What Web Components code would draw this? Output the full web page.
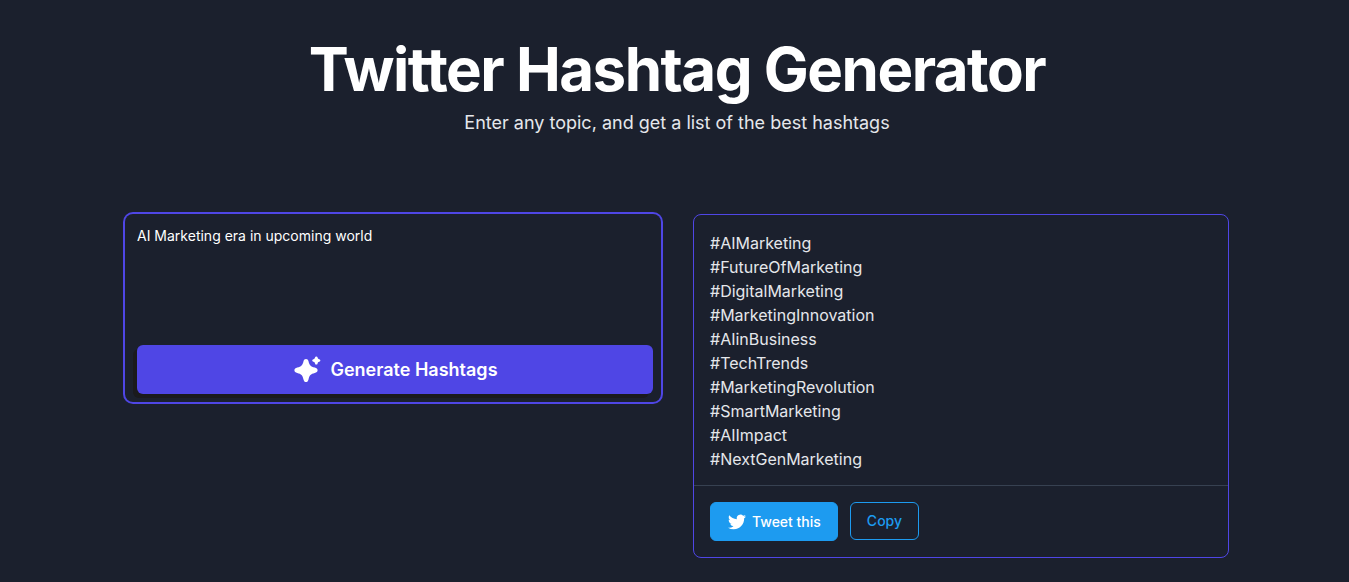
<!DOCTYPE html>
<html lang="en">
<head>
<meta charset="utf-8">
<meta name="viewport" content="width=device-width, initial-scale=1">
<title>Twitter Hashtag Generator</title>
<style>
  :root {
    --bg: #1b202d;
    --text: #e5e7eb;
    --primary: #4f46e5;
    --twitter: #1d9bf0;
    --divider: #374151;
  }

  body {
    margin: 0;
    padding: 0 20px 0 25px;
    background: var(--bg);
    color: var(--text);
    font-family: Inter, "Liberation Sans", sans-serif;
    font-size: 16px;
    line-height: 24px;
  }
</style>
</head>
<body>
<hashtag-page>
  <page-heading slot="heading">
    Twitter Hashtag Generator
    <span slot="subtitle">Enter any topic, and get a list of the best hashtags</span>
  </page-heading>
  <topic-form value="AI Marketing era in upcoming world">Generate Hashtags</topic-form>
  <result-card>
    <div>#AIMarketing</div>
    <div>#FutureOfMarketing</div>
    <div>#DigitalMarketing</div>
    <div>#MarketingInnovation</div>
    <div>#AIinBusiness</div>
    <div>#TechTrends</div>
    <div>#MarketingRevolution</div>
    <div>#SmartMarketing</div>
    <div>#AIImpact</div>
    <div>#NextGenMarketing</div>
    <action-button slot="actions" variant="solid">Tweet this</action-button>
    <action-button slot="actions">Copy</action-button>
  </result-card>
</hashtag-page>

<script>
const SVG_SPARKLE = `<svg viewBox="-1 -1 30 30" xmlns="http://www.w3.org/2000/svg" aria-hidden="true"><path d="M13 3C14.300 3 15.100 3.800 15.500 5.200C16.500 9.400 17.600 10.500 21.800 11.600C23.500 12 24.600 13 24.600 14.300C24.600 15.600 23.500 16.600 21.800 17C17.600 18.100 16.500 19.200 15.500 23.400C15.100 25 14.300 26 13 26C11.700 26 10.900 25 10.500 23.400C9.500 19.200 8.400 18.100 4.200 17C2.500 16.600 1.400 15.600 1.400 14.300C1.400 13 2.500 12 4.200 11.600C8.400 10.500 9.500 9.400 10.500 5.200C10.900 3.800 11.700 3 13 3Z" fill="currentColor"/><path d="M23.300 .4C24 .4 24.400 .8 24.600 1.600C24.900 2.700 25.100 2.900 26.200 3.200C27 3.400 27.400 3.800 27.400 4.500C27.400 5.200 27 5.600 26.200 5.800C25.100 6.100 24.900 6.300 24.600 7.400C24.400 8.200 24 8.600 23.300 8.600C22.600 8.600 22.200 8.200 22 7.400C21.700 6.300 21.500 6.100 20.400 5.800C19.600 5.600 19.200 5.200 19.200 4.500C19.200 3.800 19.600 3.400 20.400 3.200C21.500 2.900 21.700 2.700 22 1.600C22.200 .8 22.600 .4 23.300 .4Z" fill="currentColor"/></svg>`;
const SVG_TWITTER = `<svg viewBox="0 0 24 24" xmlns="http://www.w3.org/2000/svg" aria-hidden="true"><path d="M23.953 4.570a10 10 0 01-2.825.775 4.958 4.958 0 002.163-2.723c-.951.555-2.005.959-3.127 1.184a4.920 4.920 0 00-8.384 4.482C7.690 8.095 4.067 6.130 1.640 3.162a4.822 4.822 0 00-.666 2.475c0 1.710.870 3.213 2.188 4.096a4.904 4.904 0 01-2.228-.616v.060a4.923 4.923 0 003.946 4.827 4.996 4.996 0 01-2.212.085 4.936 4.936 0 004.604 3.417 9.867 9.867 0 01-6.102 2.105c-.390 0-.779-.023-1.170-.067a13.995 13.995 0 007.557 2.209c9.053 0 13.998-7.496 13.998-13.985 0-.210 0-.420-.015-.630A9.935 9.935 0 0024 4.590z" fill="currentColor"/></svg>`;

/* Clones a markup string into an element's shadow root */
function attach(host, markup) {
  const template = document.createElement('template');
  template.innerHTML = markup;
  host.attachShadow({ mode: 'open' }).appendChild(template.content.cloneNode(true));
}

class HashtagPage extends HTMLElement {
  constructor() {
    super();
    attach(this, `
<style>
  :host {
    display: block;
    max-width: 1104px;
    margin: 0 auto;
    padding: 39px 0 24px;
  }

  .columns {
    display: grid;
    grid-template-columns: repeat(2, minmax(0, 1fr));
    align-items: start;
    gap: 32px;
    margin-top: 77px;
  }

  @media (max-width: 720px) {
    .columns { grid-template-columns: minmax(0, 1fr); }
  }
</style>
<main>
  <slot name="heading"></slot>
  <div class="columns"><slot></slot></div>
</main>
`);
  }
}

class PageHeading extends HTMLElement {
  constructor() {
    super();
    attach(this, `
<style>
  :host {
    display: block;
    text-align: center;
  }

  h1 {
    margin: 0;
    color: #fff;
    font-size: 60px;
    line-height: 60px;
    font-weight: 700;
    letter-spacing: -0.025em;
  }

  p {
    margin: 10px 0 0;
    font-size: 18px;
    line-height: 28px;
  }
</style>
<h1><slot></slot></h1>
<p><slot name="subtitle"></slot></p>
`);
  }
}

class TopicForm extends HTMLElement {
  static observedAttributes = ['value'];

  constructor() {
    super();
    attach(this, `
<style>
  :host { display: block; }

  form {
    display: flex;
    flex-direction: column;
    padding: 12px 8px 8px 12px;
    border-radius: 8px;
    box-shadow: 0 0 0 2px var(--primary);
  }

  textarea {
    display: block;
    height: 119px;
    margin: 0;
    padding: 0;
    border: 0;
    outline: 0;
    resize: none;
    background: transparent;
    color: #fff;
    font-family: inherit;
    font-size: 14px;
    line-height: 20px;
  }

  button {
    display: flex;
    align-items: center;
    justify-content: center;
    gap: 8px;
    height: 49px;
    padding: 0 16px;
    border: 0;
    border-radius: 6px;
    background: var(--primary);
    box-shadow: -4px 4px 0 #1a1a1d;
    color: #fff;
    font-family: inherit;
    font-size: 18px;
    line-height: 28px;
    font-weight: 600;
    cursor: pointer;
  }

  svg {
    display: block;
    width: 30px;
    height: 30px;
  }
</style>
<form>
  <textarea aria-label="Topic"></textarea>
  <button type="button">${SVG_SPARKLE}<span><slot></slot></span></button>
</form>
`);
  }

  attributeChangedCallback(name, previous, value) {
    this.shadowRoot.querySelector('textarea').value = value;
  }
}

class ResultCard extends HTMLElement {
  constructor() {
    super();
    attach(this, `
<style>
  :host {
    display: block;
    border: 1px solid var(--primary);
    border-radius: 8px;
  }

  .tags { padding: 16px 16px 14px; }

  .actions {
    display: flex;
    align-items: flex-start;
    gap: 12px;
    padding: 16px;
    border-top: 1px solid var(--divider);
  }
</style>
<div class="tags"><slot></slot></div>
<div class="actions"><slot name="actions"></slot></div>
`);
  }
}

class ActionButton extends HTMLElement {
  constructor() {
    super();
    attach(this, `
<style>
  :host { display: block; }

  button {
    display: flex;
    align-items: center;
    gap: 6px;
    padding: 8px 16px;
    border: 1px solid var(--twitter);
    border-radius: 6px;
    background: transparent;
    color: var(--twitter);
    font-family: inherit;
    font-size: 14px;
    line-height: 20px;
    font-weight: 500;
    cursor: pointer;
  }

  svg { display: none; }

  :host([variant="solid"]) button {
    height: 39px;
    padding-left: 17px;
    background: var(--twitter);
    color: #fff;
  }

  :host([variant="solid"]) svg {
    display: block;
    width: 18px;
    height: 18px;
  }
</style>
<button type="button">${SVG_TWITTER}<span><slot></slot></span></button>
`);
  }
}

customElements.define('hashtag-page', HashtagPage);
customElements.define('page-heading', PageHeading);
customElements.define('topic-form', TopicForm);
customElements.define('result-card', ResultCard);
customElements.define('action-button', ActionButton);
</script>
</body>
</html>
